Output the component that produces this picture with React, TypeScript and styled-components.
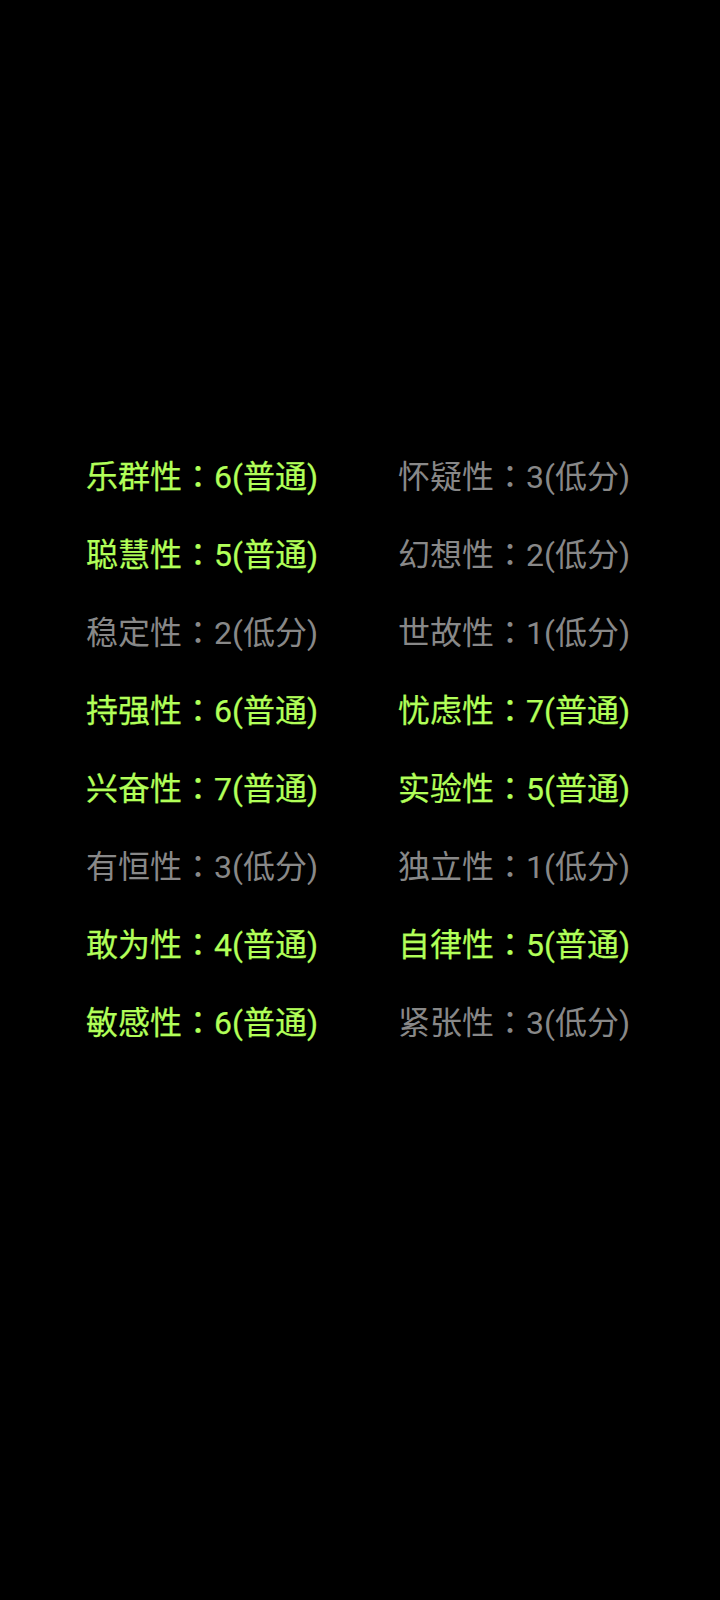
import React from "react";
import styled, { createGlobalStyle } from "styled-components";

const Global = createGlobalStyle`
  html, body {
    margin: 0;
    padding: 0;
    background: #000;
  }
  body {
    font-family: Roboto, "Noto Sans CJK SC", sans-serif;
  }
`;

const Page = styled.div`
  width: 720px;
  min-height: 1600px;
  background: #000;
  box-sizing: border-box;
  padding: 435px 0 0 86px;
`;

const Grid = styled.div`
  display: grid;
  grid-template-columns: 312px 312px;
  grid-auto-rows: 78px;
`;

const Item = styled.div<{ $high: boolean }>`
  display: flex;
  align-items: center;
  white-space: nowrap;
  font-family: Roboto, "Noto Sans CJK SC", sans-serif;
  font-size: 32px;
  font-weight: 400;
  color: ${(p) => (p.$high ? "#b2ff59" : "#888888")};
  -webkit-text-stroke: ${(p) => (p.$high ? "0.25px #b2ff59" : "0")};
`;

const Colon = styled.span`
  font-family: "Noto Sans CJK TC", sans-serif;
`;

const data: [string, number][] = [
  ["乐群性", 6],
  ["怀疑性", 3],
  ["聪慧性", 5],
  ["幻想性", 2],
  ["稳定性", 2],
  ["世故性", 1],
  ["持强性", 6],
  ["忧虑性", 7],
  ["兴奋性", 7],
  ["实验性", 5],
  ["有恒性", 3],
  ["独立性", 1],
  ["敢为性", 4],
  ["自律性", 5],
  ["敏感性", 6],
  ["紧张性", 3],
];

export default function App() {
  return (
    <>
      <Global />
      <Page>
        <Grid>
          {data.map(([name, v]) => {
            const high = v >= 4;
            return (
              <Item key={name} $high={high}>
                {name}
                <Colon>：</Colon>
                {v}({high ? "普通" : "低分"})
              </Item>
            );
          })}
        </Grid>
      </Page>
    </>
  );
}
